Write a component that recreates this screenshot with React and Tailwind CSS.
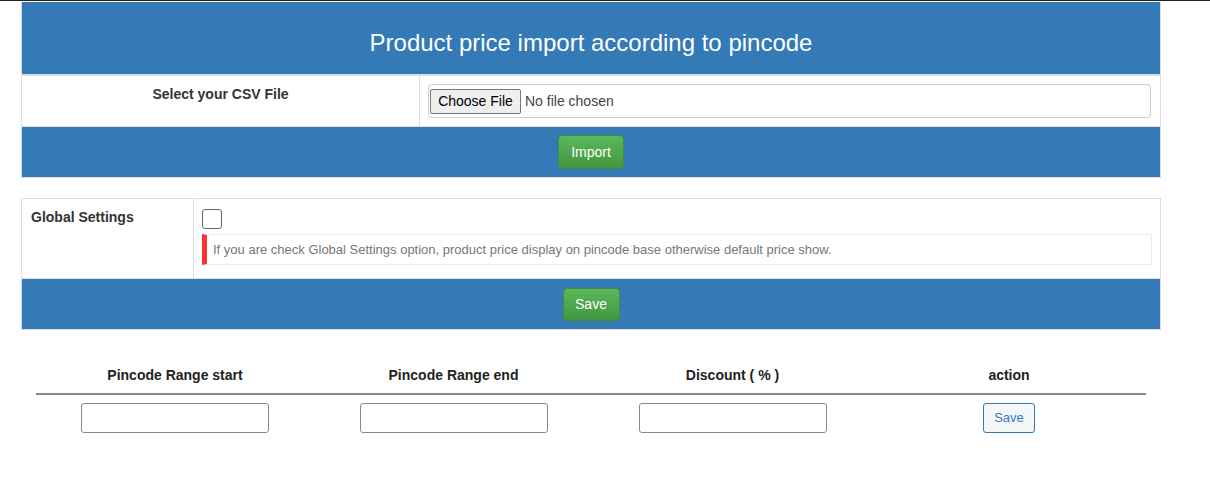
export default function App() {
  const font = { fontFamily: '"Liberation Sans", Arial, sans-serif' };
  return (
    <div className="min-h-[496px] w-[1210px] bg-white text-[14px] text-[#333]" style={font}>
      <div className="h-px w-full bg-[#222]" />
      {/* Import panel */}
      <div className="ml-[21px] mt-px w-[1140px] border border-t-0 border-[#ddd]">
        <div className="flex h-[72px] items-center justify-center bg-[#337ab7] pt-[10px]">
          <h1 className="text-[24px] leading-[26px] text-white">Product price import according to pincode</h1>
        </div>
        <div className="h-[2px] bg-[#ddd]" />
        <div className="flex h-[50px]">
          <div className="w-[398px] border-r border-[#ddd] p-[8px] text-center font-bold leading-[20px] text-[#333]">
            Select your CSV File
          </div>
          <div className="flex-1 p-[8px]">
            <div className="flex h-[34px] w-[723px] items-center rounded-[4px] border border-[#ccc] pl-[1px]">
              <span className="flex h-[25px] w-[91px] items-center justify-center rounded-[2px] border border-[#767676] bg-[#efefef] text-[14px] text-black">
                Choose File
              </span>
              <span className="ml-[4px] text-[14px] text-[#444]">No file chosen</span>
            </div>
          </div>
        </div>
        <div className="flex h-[51px] items-center justify-center border-t border-[#ddd] bg-[#337ab7]">
          <button className="h-[34px] w-[66px] rounded-[4px] border border-[#3e8f3e] bg-gradient-to-b from-[#5cb85c] to-[#419641] text-[14px] text-white">
            Import
          </button>
        </div>
      </div>

      {/* Global settings */}
      <div className="ml-[21px] mt-[20px] w-[1140px] border border-[#ddd]">
        <div className="flex h-[79px]">
          <div className="w-[172px] border-r border-[#ddd] px-[9px] py-[8px] font-bold leading-[20px] text-[#333]">
            Global Settings
          </div>
          <div className="flex-1 px-[8px] pt-[10px]">
            <div className="h-[20px] w-[20px] rounded-[3px] border border-[#666] bg-white" />
            <div className="mt-[5px] flex h-[31px] w-[950px] items-center border border-l-[5px] border-[#eee] border-l-[#ff3333] pl-[6px] text-[13px] text-[#777]">
              If you are check Global Settings option, product price display on pincode base otherwise default price show.
            </div>
          </div>
        </div>
        <div className="flex h-[51px] items-center justify-center border-t border-[#ddd] bg-[#337ab7]">
          <button className="h-[33px] w-[57px] rounded-[4px] border border-[#3e8f3e] bg-gradient-to-b from-[#5cb85c] to-[#419641] text-[14px] text-white">
            Save
          </button>
        </div>
      </div>

      {/* Pincode table */}
      <div className="ml-[36px] mt-[27px] w-[1110px]">
        <div className="grid grid-cols-[278px_279px_279px_1fr] border-b-2 border-[#888]">
          <div className="py-[8px] text-center font-bold leading-[20px] text-[#222]">Pincode Range start</div>
          <div className="py-[8px] text-center font-bold leading-[20px] text-[#222]">Pincode Range end</div>
          <div className="py-[8px] text-center font-bold leading-[20px] text-[#222]">Discount ( % )</div>
          <div className="py-[8px] text-center font-bold leading-[20px] text-[#222]">action</div>
        </div>
        <div className="grid grid-cols-[278px_279px_279px_1fr] pt-[8px]">
          <div className="flex justify-center">
            <input className="h-[30px] w-[188px] rounded-[3px] border border-[#8a8a8a] bg-white outline-none" />
          </div>
          <div className="flex justify-center">
            <input className="h-[30px] w-[188px] rounded-[3px] border border-[#8a8a8a] bg-white outline-none" />
          </div>
          <div className="flex justify-center">
            <input className="h-[30px] w-[188px] rounded-[3px] border border-[#8a8a8a] bg-white outline-none" />
          </div>
          <div className="flex justify-center">
            <button className="h-[30px] w-[52px] rounded-[3px] border border-[#337ab7] bg-[#f4f7f7] text-[13px] text-[#337ab7]">
              Save
            </button>
          </div>
        </div>
      </div>
    </div>
  );
}
